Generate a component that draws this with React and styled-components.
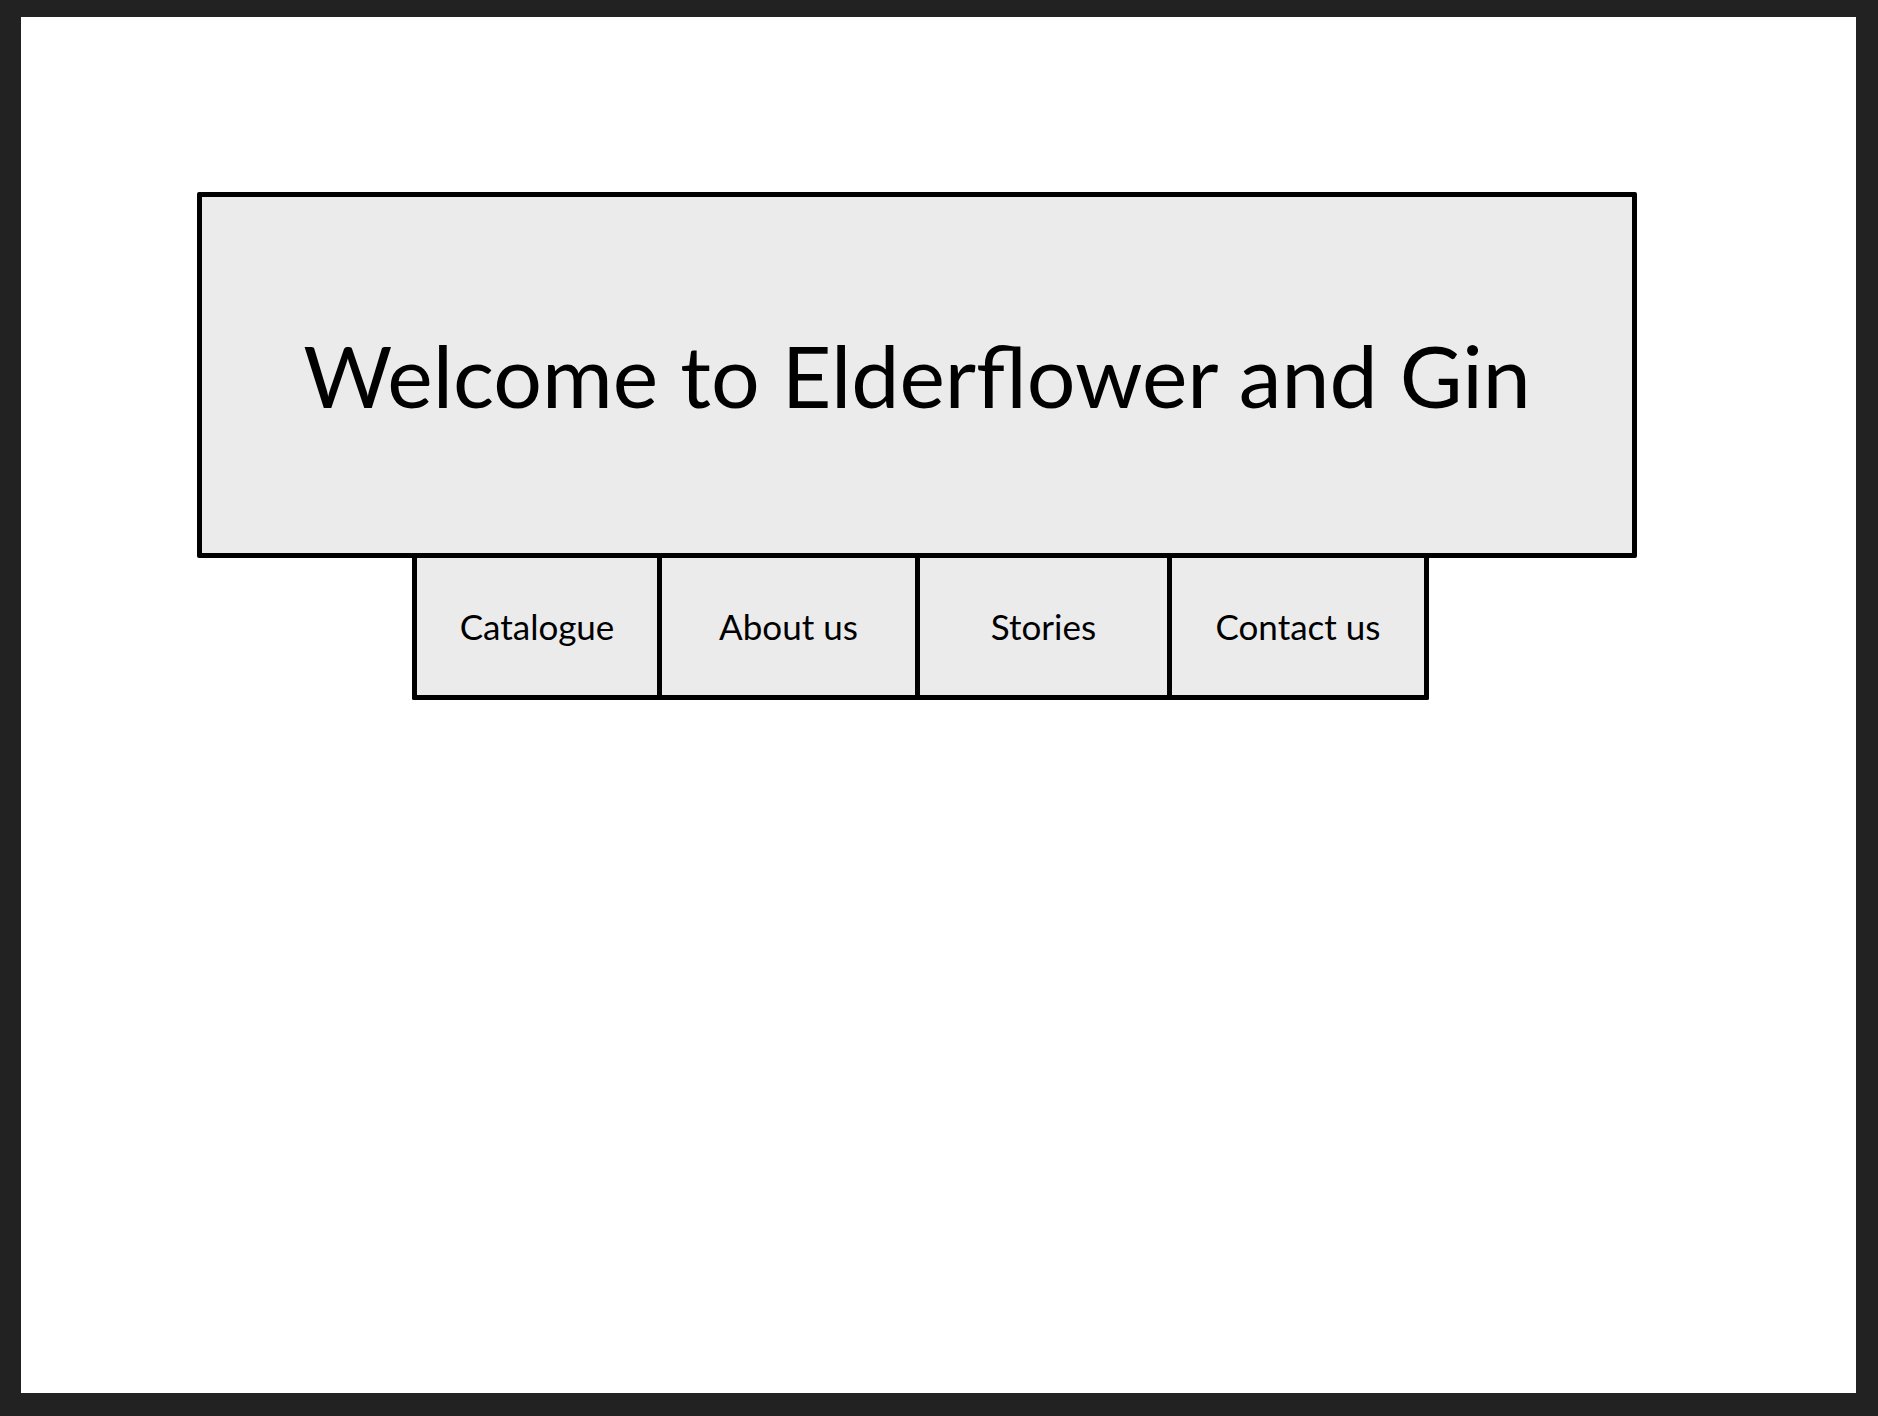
import styled, { createGlobalStyle } from "styled-components";

const GlobalStyle = createGlobalStyle`
  * { box-sizing: border-box; }
  body {
    margin: 0;
    background: #222222;
    font-family: Lato, "Open Sans", sans-serif;
    color: #000;
  }
`;

// dark frame round the white page
const Frame = styled.div`
  padding: 17px 22px 23px 21px;
`;

const Page = styled.div`
  background: #ffffff;
  height: 1376px;
  padding-top: 175px;
`;

const Banner = styled.header`
  margin-left: 176px;
  width: 1440px;
  height: 366px;
  background: #ebebeb;
  border: 5px solid #000;
  border-radius: 2px;
  display: flex;
  align-items: center;
  justify-content: center;
  padding-bottom: 2px;
`;

const Title = styled.h1`
  margin: 0;
  font-size: 86px;
  font-weight: 400;
  letter-spacing: 0;
`;

const Nav = styled.nav`
  margin-left: 391px;
  display: flex;
`;

const Tab = styled.a`
  width: ${(p) => p.w}px;
  height: 142px;
  display: flex;
  align-items: center;
  justify-content: center;
  padding-bottom: 2px;
  background: #ebebeb;
  border-left: 5px solid #000;
  border-bottom: 5px solid #000;
  border-right: ${(p) => (p.last ? "5px solid #000" : "none")};
  font-size: 35px;
  color: #000;
  text-decoration: none;
  &:first-child { border-bottom-left-radius: 2px; }
  &:last-child { border-bottom-right-radius: 2px; }
`;

const tabs = [
  { label: "Catalogue", w: 245 },
  { label: "About us", w: 258 },
  { label: "Stories", w: 252 },
  { label: "Contact us", w: 262 },
];

export default function App() {
  return (
    <>
      <GlobalStyle />
      <Frame>
        <Page>
          <Banner>
            <Title>Welcome to Elderflower and Gin</Title>
          </Banner>
          <Nav>
            {tabs.map((t, i) => (
              <Tab key={t.label} href="#" w={t.w} last={i === tabs.length - 1}>
                {t.label}
              </Tab>
            ))}
          </Nav>
        </Page>
      </Frame>
    </>
  );
}
